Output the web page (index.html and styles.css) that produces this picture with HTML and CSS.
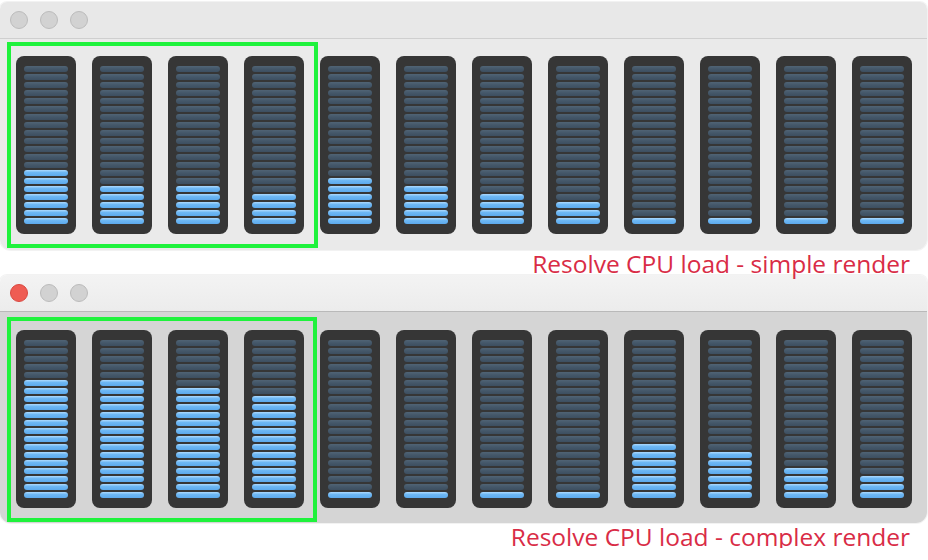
FILE: index.html
```html
<!DOCTYPE html>
<html lang="en">
<head>
<meta charset="utf-8">
<title>Resolve CPU load</title>
<link rel="stylesheet" href="styles.css">
</head>
<body>
<div class="window window--inactive window--first">
  <div class="titlebar">
    <span class="light"></span><span class="light"></span><span class="light"></span>
  </div>
  <div class="panel">
    <div class="meter" data-lit="7"></div>
    <div class="meter" data-lit="5"></div>
    <div class="meter" data-lit="5"></div>
    <div class="meter" data-lit="4"></div>
    <div class="meter" data-lit="6"></div>
    <div class="meter" data-lit="5"></div>
    <div class="meter" data-lit="4"></div>
    <div class="meter" data-lit="3"></div>
    <div class="meter" data-lit="1"></div>
    <div class="meter" data-lit="1"></div>
    <div class="meter" data-lit="1"></div>
    <div class="meter" data-lit="1"></div>
    <div class="highlight highlight--first"></div>
  </div>
</div>
<div class="caption">Resolve CPU load - simple render</div>
<div class="window window--active">
  <div class="titlebar">
    <span class="light light--close"></span><span class="light"></span><span class="light"></span>
  </div>
  <div class="panel">
    <div class="meter" data-lit="15"></div>
    <div class="meter" data-lit="15"></div>
    <div class="meter" data-lit="14"></div>
    <div class="meter" data-lit="13"></div>
    <div class="meter" data-lit="1"></div>
    <div class="meter" data-lit="1"></div>
    <div class="meter" data-lit="1"></div>
    <div class="meter" data-lit="1"></div>
    <div class="meter" data-lit="7"></div>
    <div class="meter" data-lit="6"></div>
    <div class="meter" data-lit="4"></div>
    <div class="meter" data-lit="3"></div>
    <div class="highlight highlight--second"></div>
  </div>
</div>
<div class="caption">Resolve CPU load - complex render</div>
<script src="meters.js"></script>
</body>
</html>
```
FILE: styles.css
```css
html, body {
  margin: 0;
  padding: 0;
  background: #ffffff;
}
body {
  width: 928px;
  font-family: "Open Sans", "Noto Sans", sans-serif;
}
.window {
  width: 927px;
  border-radius: 7px 7px 11px 11px;
  overflow: hidden;
  position: relative;
  box-shadow: 0 0 0 1px rgba(0, 0, 0, 0.05);
}
.window--first {
  margin-top: 2px;
}
.titlebar {
  height: 36px;
  display: flex;
  align-items: center;
  gap: 12px;
  padding-left: 10px;
}
.window--inactive .titlebar {
  background: #e8e8e8;
  border-bottom: 1px solid #cfcfcf;
}
.window--active .titlebar {
  background: linear-gradient(#f3f3f3, #ececec);
  border-bottom: 1px solid #b9b9b9;
}
.light {
  width: 18px;
  height: 18px;
  box-sizing: border-box;
  border-radius: 50%;
  background: #d2d2d2;
  border: 1px solid #bcbcbc;
}
.light--close {
  background: #ef5c53;
  border-color: #d94840;
}
.panel {
  height: 211px;
  box-sizing: border-box;
  padding: 17px 15px 16px 16px;
  display: flex;
  gap: 16px;
  position: relative;
}
.window--inactive .panel {
  background: #eaeaea;
}
.window--active .panel {
  background: #d5d5d5;
  padding-top: 18px;
}
.meter {
  width: 60px;
  height: 178px;
  box-sizing: border-box;
  padding: 10px 8px;
  background: #363636;
  border-radius: 8px;
  display: flex;
  flex-direction: column;
  gap: 2px;
}
.seg {
  height: 6px;
  border-radius: 3px;
  background: linear-gradient(#506475, #445769 50%, #3d4f60);
}
.seg--on {
  background: linear-gradient(#aedaff, #6eb8f4 40%, #5ca9ec);
}
.highlight {
  position: absolute;
  left: 7px;
  box-sizing: border-box;
  border: 4px solid #1ff23c;
}
.highlight--first {
  top: 3px;
  width: 311px;
  height: 206px;
}
.highlight--second {
  top: 5px;
  width: 310px;
  height: 205px;
}
.caption {
  position: relative;
  z-index: 2;
  height: 25px;
  line-height: 28px;
  text-align: right;
  padding-right: 18px;
  font-size: 24.5px;
  color: #d92c46;
  white-space: nowrap;
}
```
FILE: meters.js
```js
document.querySelectorAll('.meter').forEach(function (m) {
  var lit = parseInt(m.getAttribute('data-lit'), 10) || 0;
  for (var i = 0; i < 20; i++) {
    var s = document.createElement('span');
    s.className = 'seg' + (i >= 20 - lit ? ' seg--on' : '');
    m.appendChild(s);
  }
});
```
